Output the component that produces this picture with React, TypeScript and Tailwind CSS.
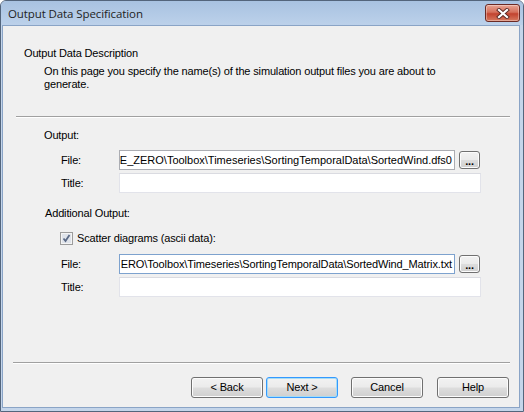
import React from "react";

const FONT = "font-['Liberation_Sans',Arial,sans-serif]";

const CloseButton = () => (
  <div className="w-[35px] h-[18px] rounded-[3px] border border-[#6b2a24] bg-[linear-gradient(#e8a493,#d5705b_45%,#c2432f_55%,#d77a5f)] flex items-center justify-center shadow-[inset_0_0_0_1px_rgba(255,255,255,0.35)]">
    <svg width="14" height="11" viewBox="0 0 14 11">
      <path d="M3 2 L11 9 M11 2 L3 9" stroke="#5a2a25" strokeWidth="4" strokeLinecap="square" />
      <path d="M3 2 L11 9 M11 2 L3 9" stroke="#ffffff" strokeWidth="2.2" strokeLinecap="square" />
    </svg>
  </div>
);

const Button = ({ label, primary }: { label: string; primary?: boolean }) => (
  <div
    className={`w-[72px] h-[21px] rounded-[3px] border flex items-center justify-center text-[11px] text-black bg-[linear-gradient(#f2f2f2,#ebebeb_48%,#dddddd_52%,#cfcfcf)] ${
      primary ? "border-[#3399ff] shadow-[inset_0_0_0_1px_#a7dcf4]" : "border-[#707070] shadow-[inset_0_0_0_1px_#fcfcfc]"
    }`}
  >
    {label}
  </div>
);

const Browse = () => (
  <div className="w-[21px] h-[18px] ml-[4px] rounded-[3px] border border-[#707070] bg-[linear-gradient(#f2f2f2,#ebebeb_48%,#dddddd_52%,#cfcfcf)] shadow-[inset_0_0_0_1px_#fcfcfc] flex items-end justify-center pb-[3px]">
    <span className="text-[11px] leading-[8px] font-bold">...</span>
  </div>
);

// the path is scrolled to its end, so only the tail of it shows
const FileRow = ({ value, border, tracking }: { value: string; border: string; tracking: string }) => (
  <div className="flex items-center h-[20px] pl-[58px]">
    <span className="w-[58px] shrink-0">File:</span>
    <div className={`w-[336px] h-[20px] bg-white border ${border} ${tracking} overflow-hidden flex items-center justify-end pr-[2px] whitespace-nowrap text-[11px]`}>
      {value}
    </div>
    <Browse />
  </div>
);

const TitleRow = () => (
  <div className="flex items-center h-[20px] pl-[58px]">
    <span className="w-[58px] shrink-0">Title:</span>
    <div className="w-[362px] h-[20px] bg-white border border-[#e2e3ea] border-t-[#dadbe1]" />
  </div>
);

export default function App() {
  return (
    <div className={`w-[524px] h-[412px] ${FONT} text-[11px] tracking-[-0.15px] text-black bg-[#c4d5ea] border border-[#53657c] rounded-t-[6px] flex flex-col overflow-hidden`}>
      <div className="h-[24px] flex items-start justify-between pl-[7px] pr-[3px] bg-[linear-gradient(#a8c2e1,#bcd1ea)]">
        <span className="font-['Open_Sans',sans-serif] text-[11.5px] tracking-[-0.1px] text-[#1e1e1e] mt-[4px]">Output Data Specification</span>
        <div className="mt-[3px]">
          <CloseButton />
        </div>
      </div>
      <div className="flex-1 ml-[1px] mr-[3px] mb-[3px] bg-[#f0f0f0] border border-[#8aa4c6] flex flex-col">
        <div className="pl-[21px] pt-[21px] leading-[13px]">Output Data Description</div>
        <div className="pl-[41px] pt-[5px] leading-[13px]">
          On this page you specify the name(s) of the simulation output files you are about to
          <br />
          generate.
        </div>
        <div className="ml-[13px] mr-[9px] mt-[25px] h-[2px] border-t border-[#a0a0a0] border-b border-b-white" />
        <div className="flex flex-col mt-[11px]">
          <div className="pl-[41px] leading-[13px]">Output:</div>
          <div className="mt-[8px]">
            <FileRow value="E_ZERO\Toolbox\Timeseries\SortingTemporalData\SortedWind.dfs0" border="border-[#abadb3]" tracking="tracking-[0px]" />
          </div>
          <div className="mt-[3px]">
            <TitleRow />
          </div>
          <div className="pl-[42px] mt-[14px] leading-[13px]">Additional Output:</div>
          <div className="flex items-center mt-[12px] pl-[57px] h-[13px]">
            <svg width="13" height="13" viewBox="0 0 13 13">
              <rect x="0.5" y="0.5" width="12" height="12" fill="#f4f4f4" stroke="#9c9c9c" />
              <rect x="2" y="2" width="9" height="9" fill="#dfe3ea" />
              <path d="M3.5 6.5 L5.5 9 L9.5 3" stroke="#5b6a86" strokeWidth="1.8" fill="none" />
            </svg>
            <span className="ml-[4px]">Scatter diagrams (ascii data):</span>
          </div>
          <div className="mt-[9px]">
            <FileRow value="ERO\Toolbox\Timeseries\SortingTemporalData\SortedWind_Matrix.txt" border="border-[#7da2ce]" tracking="tracking-[-0.12px]" />
          </div>
          <div className="mt-[3px]">
            <TitleRow />
          </div>
        </div>
        <div className="flex-1" />
        <div className="ml-[10px] mr-[9px] h-[2px] border-t border-[#a0a0a0] border-b border-b-white" />
        <div className="flex justify-end pr-[10px] pt-[13px] pb-[9px]">
          <Button label="< Back" />
          <div className="ml-[3px]">
            <Button label="Next >" primary />
          </div>
          <div className="ml-[13px]">
            <Button label="Cancel" />
          </div>
          <div className="ml-[14px]">
            <Button label="Help" />
          </div>
        </div>
      </div>
    </div>
  );
}
